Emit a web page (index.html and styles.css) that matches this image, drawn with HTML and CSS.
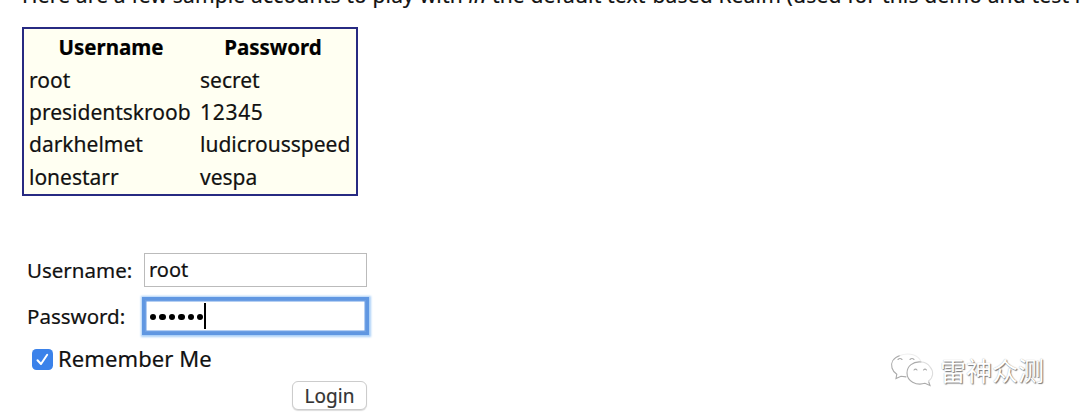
FILE: index.html
```html
<!DOCTYPE html>
<html lang="en">
<head>
<meta charset="utf-8">
<title>Login</title>
<link rel="stylesheet" href="styles.css">
</head>
<body>
<main class="page">
  <p class="intro">Here are a few sample accounts to play with <em>in</em> the default text-based Realm (used for this demo and test installs only)</p>
  <table class="accounts">
    <thead><tr><th>Username</th><th>Password</th></tr></thead>
    <tbody>
      <tr><td>root</td><td>secret</td></tr>
      <tr><td>presidentskroob</td><td class="digits">12345</td></tr>
      <tr><td>darkhelmet</td><td>ludicrousspeed</td></tr>
      <tr><td>lonestarr</td><td>vespa</td></tr>
    </tbody>
  </table>
  <form class="login">
    <div class="row"><span class="label">Username:</span><div class="field">root</div></div>
    <div class="row row-password"><span class="label">Password:</span><div class="field focused"><i class="dot"></i><i class="dot"></i><i class="dot"></i><i class="dot"></i><i class="dot"></i><i class="dot"></i><i class="caret"></i></div></div>
    <div class="remember">
      <svg class="check" width="21" height="21" viewBox="0 0 21 21"><rect width="21" height="21" rx="4.5" fill="#3b82ea"/><path d="M5.5 11.2 9 15 15.2 5.8" fill="none" stroke="#fff" stroke-width="2" stroke-linecap="round" stroke-linejoin="round"/></svg>
      <span>Remember Me</span>
    </div>
    <button class="submit" type="button">Login</button>
  </form>
  <div class="watermark">
    <svg class="bubbles" width="46" height="36" viewBox="0 0 46 36" fill="none" stroke="#aaa" stroke-width="1.1" stroke-linecap="round">
      <path d="M10 2.500C3 5 .5 10 2 15c.8 2.800 2.500 4.700 4.800 6.200L6 25.500l5-2.200 5 .6"/>
      <path d="M10 2.500C19-1 29 2 31 9" stroke="#eee"/>
      <path d="M31 9c-8-.8-14 4-14 11 0 8 9 13 18 10.300l5 2.200-1.500-4.200"/>
      <path d="M38.500 28.300c5-4 5.500-10 1.500-14.500M31 9c4 0 7 2 9 4.800" stroke="#ddd"/>
      <path d="M8 6.500q2-2 4 0M20 6.500q2-2 4 0M24 17q1.500-1.700 3 0M33.500 17q1.500-1.700 3 0"/>
    </svg>
    <span lang="zh">雷神众测</span>
  </div>
</main>
</body>
</html>
```
FILE: styles.css
```css
* { box-sizing: border-box; }
body { margin: 0; background: #fff; }
.page {
  position: relative;
  width: 1080px;
  height: 419px;
  padding-left: 22px;
  overflow: hidden;
  color: #111;
  font: 21px/30px "Noto Sans", "Open Sans", sans-serif;
  -webkit-text-stroke: .2px currentColor;
}
.intro { margin: -20px 0 17px; white-space: nowrap; letter-spacing: .17px; }
.accounts {
  width: 336px;
  height: 169px;
  padding: 2px 0 1px;
  border: 2px solid #272a82;
  border-spacing: 0;
  table-layout: fixed;
  background: #fffff2;
}
.accounts th, .accounts td { height: 32.4px; padding: 0 0 0 5px; text-align: left; line-height: 30px; white-space: nowrap; }
.accounts th { padding-left: 3px; text-align: center; color: #000; font-size: 20.500px; }
.accounts th + th { padding: 0 5px 0 0; }
.accounts th:first-child { width: 171px; }
.accounts .digits { letter-spacing: .7px; }
.login { width: 345px; margin-top: 57px; padding-left: 5px; }
.row { display: flex; align-items: center; height: 34px; }
.row-password { margin-top: 12px; }
.label { width: 117px; font-size: 20.500px; }
.field { display: flex; align-items: center; width: 223px; height: 34px; padding-left: 4px; border: 1px solid #bbb; background: #fff; font-size: 20px; }
.focused { gap: 3px; padding-left: 5px; border: 1px solid #6297df; box-shadow: inset 0 0 0 1.5px #6c9fe5, 0 0 0 2px #6097e2, 0 0 2px 3.500px #a9cff8; }
.dot { width: 6.400px; height: 6.400px; margin-top: 2px; border-radius: 50%; background: #000; }
.caret { width: 2px; height: 26px; margin-left: -2px; background: #000; }
.remember { display: flex; align-items: center; gap: 5px; height: 30px; margin-top: 10px; padding-left: 5px; font-size: 22px; letter-spacing: .1px; }
.check { margin-top: 2px; }
.submit {
  display: block;
  width: 75px;
  height: 29px;
  margin: 8px 0 0 auto;
  padding: 0;
  border: 1px solid #ccc;
  border-radius: 6px;
  background: #fff;
  box-shadow: 0 1px 1px #ddd;
  color: #333;
  font: 19px/26px "Noto Sans", sans-serif;
}
.watermark {
  position: absolute;
  left: 890px;
  top: 352px;
  display: flex;
  align-items: center;
  gap: 4px;
  color: #fff;
  font: 26px/38px "Noto Sans CJK SC", sans-serif;
  text-shadow: 1px 1px 1px #777, 0 0 1px #aaa;
  -webkit-text-stroke: 0;
}
.watermark span { position: relative; top: -1px; }
```
